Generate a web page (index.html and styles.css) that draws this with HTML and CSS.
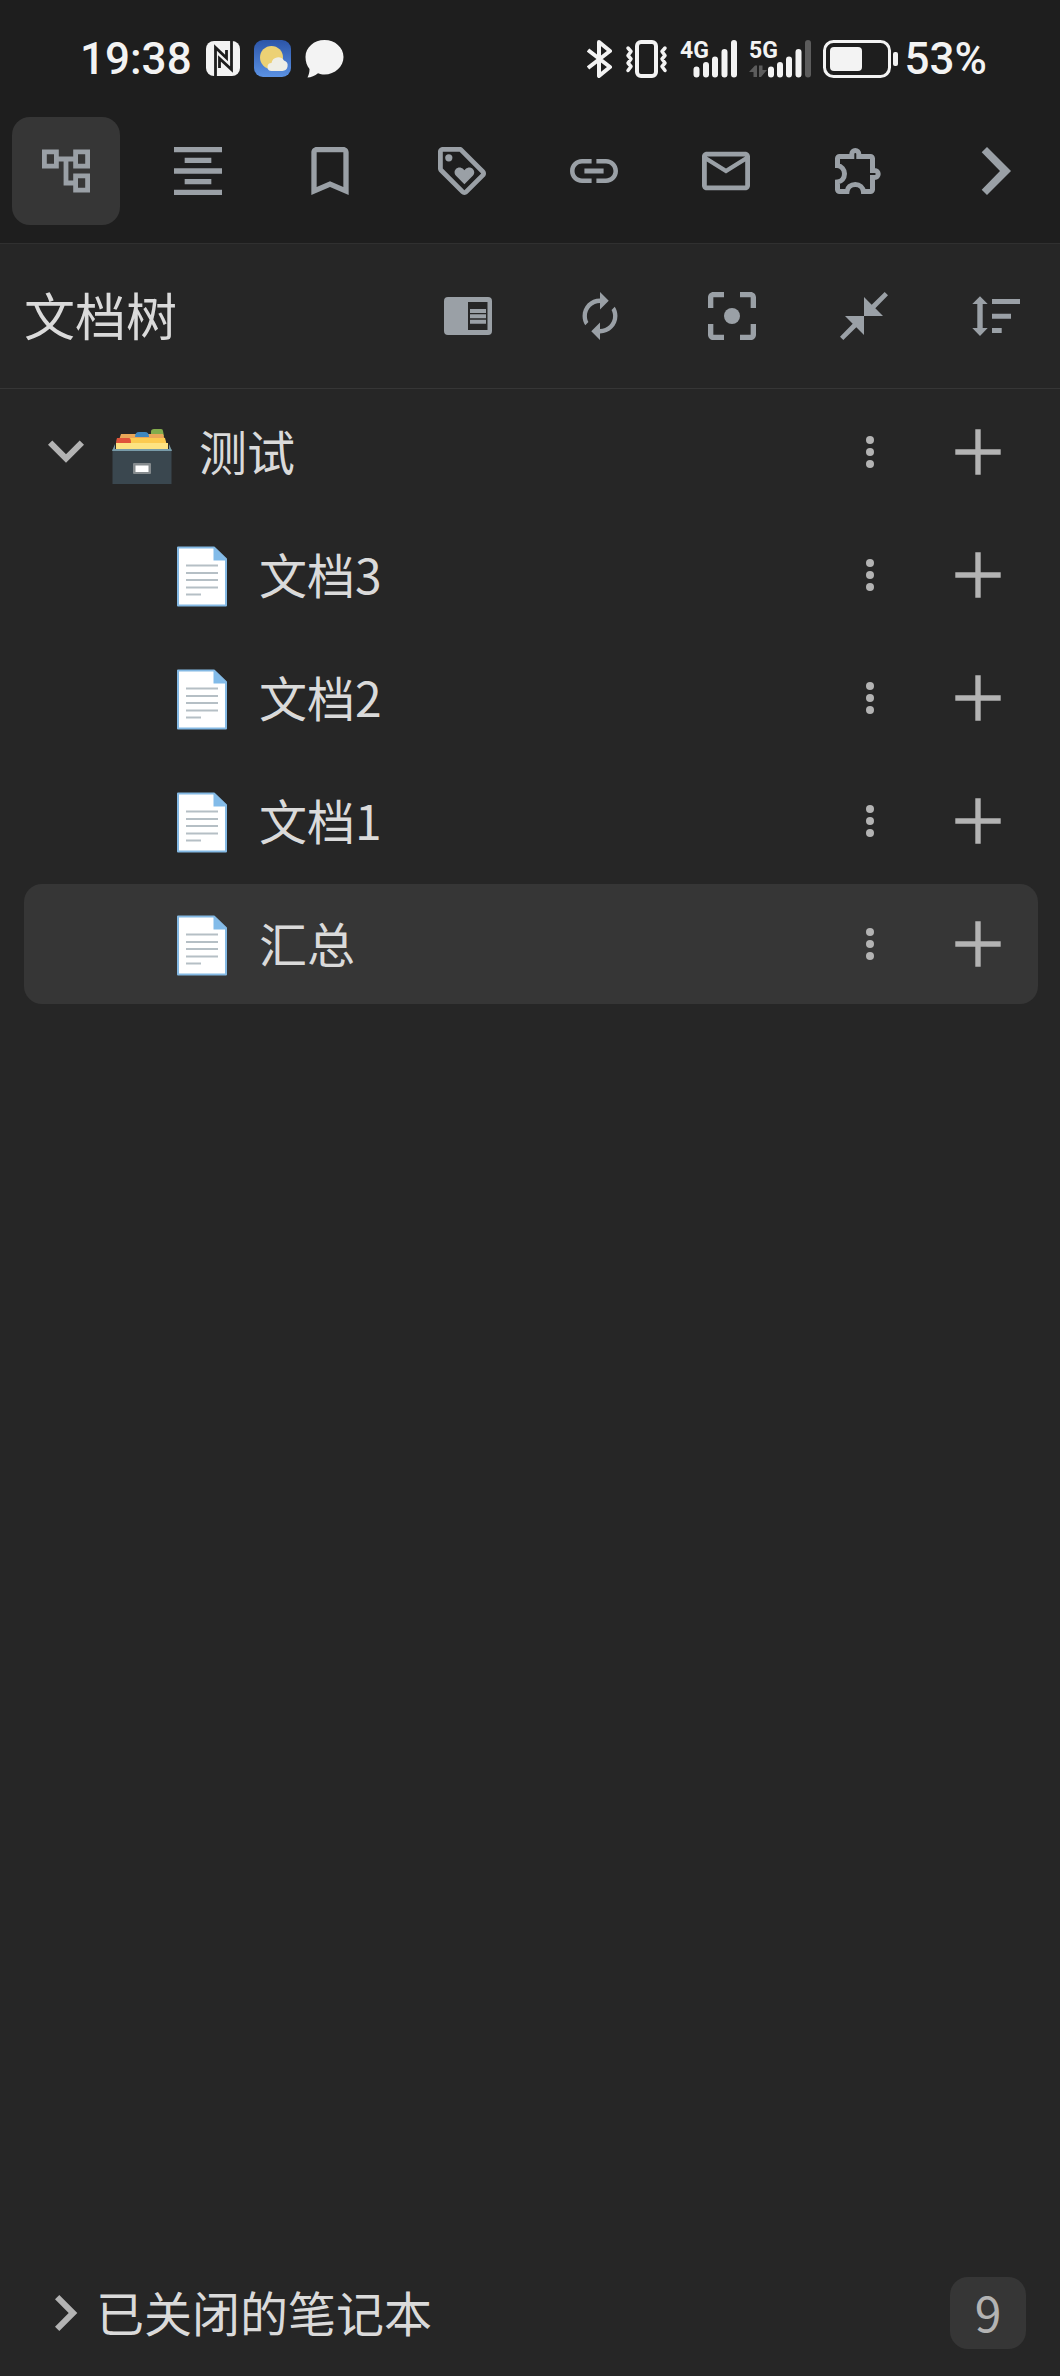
FILE: index.html
```html
<!DOCTYPE html>
<html lang="zh-CN">
<head>
<meta charset="utf-8">
<meta name="viewport" content="width=device-width">
<title>文档树</title>
<link rel="stylesheet" href="styles.css">
</head>
<body>
<svg class="defs" aria-hidden="true">
  <symbol id="more" viewBox="0 0 48 48"><circle cx="24" cy="12" r="4"/><circle cx="24" cy="24" r="4"/><circle cx="24" cy="36" r="4"/></symbol>
  <symbol id="plus" viewBox="0 0 48 48"><path d="M21.300 1.300h5.400v20h20v5.400h-20v20h-5.400v-20h-20v-5.400h20z"/></symbol>
  <symbol id="doc" viewBox="0 0 60 64">
    <path d="M6 4.500h36L54 16v46.500H6z" fill="#fff" stroke="#84b9e4" stroke-width="2" stroke-linejoin="round"/>
    <path d="M41.500 4.500 54.500 17.500h-13z" fill="#82bbe9"/>
    <path d="M14 22.500h32M14 30h32M14 37h32M14 44.500h32M14 51.500h15" stroke="#b5bfc5" stroke-width="2"/>
  </symbol>
</svg>

<header class="status">
  <div class="status-group">
    <span class="clock">19:38</span>
    <svg class="s-nfc" viewBox="0 0 34 35"><rect width="34" height="35" rx="8" fill="#f3f3f3"/><path d="M9.500 35V6.500L20.500 17V9M25.500 0v28.500L13.500 17.500V27" fill="none" stroke="#1e1e1e" stroke-width="2.800"/></svg>
    <svg class="s-weather" viewBox="0 0 37 37"><defs><linearGradient id="sky" x2="0" y2="1"><stop stop-color="#2c55a8"/><stop offset="1" stop-color="#5b92e4"/></linearGradient></defs><rect width="37" height="37" rx="9" fill="url(#sky)"/><circle cx="17.500" cy="17.500" r="11.500" fill="#ecd174"/><path d="M17.500 31a4 4 0 0 1 0-8 6.800 6.800 0 0 1 12.500-2.500A5.400 5.400 0 0 1 28 31z" fill="#eeeee6"/></svg>
    <svg class="s-bubble" viewBox="0 0 39 38"><path d="M19.500 0C30 0 38.500 7.500 38.500 17S30 34.500 19.500 34.500c-2.500 0-4.500-.4-6.500-1.200C10 36 6 37.500 2.500 37.500c1.500-3 2-5.500 2-8.500C2 26 .5 22 .5 17 .5 7.500 9 0 19.500 0z" fill="#f3f3f3"/></svg>
  </div>
  <div class="status-group status-right">
    <svg class="s-bt" viewBox="0 0 26 38"><path d="M1 10l22 17-11 9V2l11 9L1 28" fill="none" stroke="#f3f3f3" stroke-width="4" stroke-linejoin="round"/></svg>
    <svg class="s-vib" viewBox="0 0 43 38"><g fill="none" stroke="#f3f3f3" stroke-width="4" stroke-linejoin="round"><rect x="12" y="2" width="19" height="34" rx="4"/><path stroke-width="3.500" stroke-linecap="round" d="M3 8l3 3.500-3 4 3 3.500-3 4 3 3.500-3 4M40 8l-3 3.500 3 4-3 3.500 3 4-3 3.500 3 4"/></g></svg>
    <svg class="s-signal s-4g" viewBox="0 0 57 38"><text x="0" y="18" class="net">4G</text><path class="bars" d="M16.500 29.500v5M26 25v9.500M35 19.500v15M44.500 12v22.500M54 3v31.500"/></svg>
    <svg class="s-signal" viewBox="0 0 62 38"><text x="0" y="18" class="net">5G</text><path class="bars" d="M22 29.500v5M31 25v9.500M40 19.500v15M49.500 12v22.500"/><path class="bars dim" d="M59 3v31.500"/><path d="M0 32l6-6.500h2V37H4.500v-5zM10 25.500h3.500V30H18l-6 7h-2z" fill="#5c5c5c"/></svg>
    <svg class="s-battery" viewBox="0 0 76 38"><rect x="1.500" y="1.500" width="65" height="35" rx="9" fill="none" stroke="#f3f3f3" stroke-width="3"/><rect x="7" y="7" width="32" height="24" rx="4" fill="#f3f3f3"/><rect x="70" y="12" width="5" height="14" rx="2" fill="#f3f3f3"/></svg>
    <span class="clock">53%</span>
  </div>
</header>

<nav class="tabs" aria-label="侧栏">
  <button class="tab active" aria-label="文档树"><svg class="icon" viewBox="2 2 20 20"><path d="M22 11V3h-7v3H9V3H2v8h7V8h2v10h4v3h7v-8h-7v3h-2V8h2v3h7zM7 9H4V5h3v4zm10 6h3v4h-3v-4zm0-10h3v4h-3V5z"/></svg></button>
  <button class="tab" aria-label="大纲"><svg class="icon" viewBox="3 3 18 18"><path d="M7 15v2h10v-2H7zm-4 6h18v-2H3v2zm0-8h18v-2H3v2zm4-6v2h10V7H7zM3 3v2h18V3H3z"/></svg></button>
  <button class="tab" aria-label="书签"><svg class="icon" viewBox="3 3 18 18"><path d="M17 3H7c-1.100 0-2 .9-2 2v16l7-3 7 3V5c0-1.100-.9-2-2-2zm0 15l-5-2.180L7 18V5h10v13z"/></svg></button>
  <button class="tab" aria-label="标签"><svg class="icon" viewBox="2 2 20 20"><path d="M21.410 11.580l-9-9C12.050 2.220 11.550 2 11 2H4c-1.100 0-2 .9-2 2v7c0 .55.22 1.050.59 1.420l9 9c.36.36.86.58 1.410.58s1.050-.22 1.410-.59l7-7c.37-.36.59-.86.59-1.410s-.23-1.060-.59-1.420zM13 20.010L4 11V4h7v-.01l9 9-7 7.020z"/><circle cx="6.500" cy="6.500" r="1.500"/><path d="M8.900 12.550c0 .57.23 1.070.6 1.450l3.500 3.500 3.500-3.500c.37-.37.6-.89.6-1.450 0-1.130-.92-2.050-2.050-2.050-.57 0-1.080.23-1.450.6l-.6.6-.6-.59c-.37-.38-.89-.61-1.450-.61-1.130 0-2.050.92-2.050 2.050z"/></svg></button>
  <button class="tab" aria-label="反向链接"><svg class="icon" viewBox="2 2 20 20"><path d="M3.900 12c0-1.710 1.390-3.100 3.100-3.100h4V7H7c-2.760 0-5 2.240-5 5s2.240 5 5 5h4v-1.900H7c-1.710 0-3.100-1.390-3.100-3.100zM8 13h8v-2H8v2zm9-6h-4v1.900h4c1.710 0 3.100 1.390 3.100 3.100s-1.390 3.100-3.100 3.100h-4V17h4c2.760 0 5-2.240 5-5s-2.240-5-5-5z"/></svg></button>
  <button class="tab" aria-label="收集箱"><svg class="icon" viewBox="2 2 20 20"><path d="M22 6c0-1.100-.9-2-2-2H4c-1.100 0-2 .9-2 2v12c0 1.100.9 2 2 2h16c1.100 0 2-.9 2-2V6zm-2 0l-8 5-8-5h16zm0 12H4V8l8 5 8-5v10z"/></svg></button>
  <button class="tab" aria-label="插件"><svg class="icon" viewBox="0 0 48 48"><path d="M3.500 21V11.500a2 2 0 0 1 2-2h12.300V7a3.500 3.500 0 0 1 7 0v2.500h11.700a2 2 0 0 1 2 2v12h2.200a3.500 3.500 0 0 1 0 7h-2.200v12a2 2 0 0 1-2 2H29.400C29 40.500 26 37.500 21.300 37.500S13.500 40.500 13 44.500H5.500a2 2 0 0 1-2-2V35C7.500 34.500 10.500 31 10.500 26.800S7.500 19 3.500 18.500z" fill="none" stroke="currentColor" stroke-width="5"/></svg></button>
  <button class="tab last" aria-label="关闭"><svg class="icon" viewBox="0 0 48 48"><path d="M15 0l24 24-24 24-5.300-5.300L28 24 9.700 5.300z"/></svg></button>
</nav>

<main class="panel">
  <div class="toolbar">
    <h1 class="title">文档树</h1>
    <button class="tool" aria-label="阅读模式"><svg class="icon" viewBox="0 0 48 48"><path fill-rule="evenodd" d="M4 5h40a4 4 0 0 1 4 4v30a4 4 0 0 1-4 4H4a4 4 0 0 1-4-4V9a4 4 0 0 1 4-4zm20 5v28h19.500V10z"/><path d="M26 17h16v4H26zM26 22.300h16v4H26zM26 27.700h16v4H26z"/></svg></button>
    <button class="tool" aria-label="刷新"><svg class="icon" viewBox="1 1 22 22"><path d="M12 6v3l4-4-4-4v3c-4.420 0-8 3.580-8 8 0 1.570.46 3.030 1.240 4.260L6.700 14.800c-.45-.83-.7-1.790-.7-2.800 0-3.310 2.690-6 6-6zm6.760 1.740L17.300 9.200c.44.84.7 1.790.7 2.800 0 3.310-2.690 6-6 6v-3l-4 4 4 4v-3c4.420 0 8-3.580 8-8 0-1.570-.46-3.030-1.240-4.260z"/></svg></button>
    <button class="tool" aria-label="定位"><svg class="icon" viewBox="3 3 18 18"><path d="M5 15H3v4c0 1.100.9 2 2 2h4v-2H5v-4zM5 5h4V3H5c-1.100 0-2 .9-2 2v4h2V5zm14-2h-4v2h4v4h2V5c0-1.100-.9-2-2-2zm0 16h-4v2h4c1.100 0 2-.9 2-2v-4h-2v4z"/><circle cx="12" cy="12" r="3"/></svg></button>
    <button class="tool" aria-label="折叠"><svg class="icon" viewBox="0 0 48 48"><path d="M24 5v19h19l-7.700-7.700L48 3.300 44.700 0 31.700 12.700zM24 43V24H5l7.700 7.700L0 44.700 3.300 48l13-12.700z"/></svg></button>
    <button class="tool" aria-label="排序"><svg class="icon" viewBox="0 0 48 48"><path d="M8 4.300l7.700 7.700h-5v24h5L8 44 .3 36h5V12h-5zM20 7h28v5H20zM20 21.700h19v5H20zM20 36h9.700v5H20z"/></svg></button>
  </div>

  <ul class="tree">
    <li class="row">
      <button class="toggle" aria-label="展开"><svg class="arrow" viewBox="0 0 36 36"><path d="M4.300 6.500 18 20.200 31.700 6.500l4.300 4.300-18 18-18-18z"/></svg></button>
      <svg class="emoji" viewBox="0 0 60 64">
        <path d="M39 14v-2.500Q39 9 42 9h7q2 0 2 2l1 5H39z" fill="#83ac4c"/>
        <path d="M9 14h42l5 15H4z" fill="#e9a758"/>
        <path d="M5 18h48l3 12H4z" fill="#fbca50"/><path d="M4 23h52v7H4z" fill="#fde382"/>
        <path d="M5 18h12q2 0 2 5H4z" fill="#df533a"/><path d="M23 17q0-5 4-5h6q4 0 4 5z" fill="#3f87bf"/>
        <path d="M3 24 0 31h60l-3-7v5H3z" fill="#799aa5"/><path d="M.5 30.500h59V64H.5z" fill="#3a474f"/>
        <path d="M.5 29.500h59v1.500H.5z" fill="#789ba9"/><rect x="21" y="43" width="18" height="11" rx="1" fill="#858b8e"/><path d="M23.500 45.500h13v6.500h-13z" fill="#fff"/>
      </svg>
      <span class="name">测试</span>
      <button class="act" aria-label="更多"><svg class="icon"><use href="#more"/></svg></button>
      <button class="act" aria-label="新建文档"><svg class="icon"><use href="#plus"/></svg></button>
    </li>
    <li class="row child">
      <svg class="emoji"><use href="#doc"/></svg><span class="name">文档3</span>
      <button class="act" aria-label="更多"><svg class="icon"><use href="#more"/></svg></button>
      <button class="act" aria-label="新建文档"><svg class="icon"><use href="#plus"/></svg></button>
    </li>
    <li class="row child">
      <svg class="emoji"><use href="#doc"/></svg><span class="name">文档2</span>
      <button class="act" aria-label="更多"><svg class="icon"><use href="#more"/></svg></button>
      <button class="act" aria-label="新建文档"><svg class="icon"><use href="#plus"/></svg></button>
    </li>
    <li class="row child">
      <svg class="emoji"><use href="#doc"/></svg><span class="name">文档1</span>
      <button class="act" aria-label="更多"><svg class="icon"><use href="#more"/></svg></button>
      <button class="act" aria-label="新建文档"><svg class="icon"><use href="#plus"/></svg></button>
    </li>
    <li class="row child selected">
      <svg class="emoji"><use href="#doc"/></svg><span class="name">汇总</span>
      <button class="act" aria-label="更多"><svg class="icon"><use href="#more"/></svg></button>
      <button class="act" aria-label="新建文档"><svg class="icon"><use href="#plus"/></svg></button>
    </li>
  </ul>

  <button class="row closed">
    <svg class="arrow" viewBox="0 0 36 36"><path d="M11.300 0l18 18-18 18L7 31.700 20.700 18 7 4.300z"/></svg>
    <span class="name">已关闭的笔记本</span>
    <span class="count">9</span>
  </button>
</main>
</body>
</html>
```
FILE: styles.css
```css
* { box-sizing: border-box; }

body {
  margin: 0;
  min-height: 100vh;
  display: flex;
  flex-direction: column;
  background: #1e1e1e;
  color: #dadada;
  font: 48px/60px "Noto Sans CJK SC", sans-serif;
}

button {
  margin: 0;
  padding: 0;
  border: 0;
  background: none;
  color: inherit;
  font: inherit;
  text-align: left;
}

svg { display: block; flex: none; }
.defs { position: absolute; width: 0; height: 0; }
.icon { width: 48px; height: 48px; fill: currentColor; }

/* Status bar */
.status {
  display: flex;
  justify-content: space-between;
  align-items: center;
  height: 117px;
  padding: 0 73px 0 80px;
  color: #f3f3f3;
}
.status-group { display: flex; align-items: center; gap: 14px; }
.status-right { gap: 12px; }
.clock { font: 500 44px/52px Roboto, sans-serif; }
.s-nfc { width: 34px; height: 35px; }
.s-weather { width: 37px; height: 37px; }
.s-bubble { width: 39px; height: 38px; }
.s-bt { width: 26px; height: 38px; }
.s-vib { width: 43px; height: 38px; }
.s-signal { width: 62px; height: 38px; overflow: visible; }
.s-4g { width: 57px; }
.s-battery { width: 76px; height: 38px; }
.status-right .clock { margin-left: -6px; }
.net { font: 700 23px Roboto, sans-serif; fill: #f3f3f3; }
.bars { fill: none; stroke: #f3f3f3; stroke-width: 6; stroke-linecap: round; }
.dim { stroke: #5c5c5c; }

/* Dock tabs */
.tabs {
  display: flex;
  gap: 24px;
  padding: 0 10px 18px 12px;
  color: #9aa0a6;
}
.tab {
  display: grid;
  place-items: center;
  width: 108px;
  height: 108px;
  border-radius: 18px;
}
.active { background: #363636; }
.last { margin-left: auto; }

/* Panel */
.panel {
  flex: 1;
  display: flex;
  flex-direction: column;
  padding-bottom: 3px;
  border-top: 1px solid #303030;
  background: #262626;
}
.toolbar {
  display: flex;
  align-items: center;
  gap: 24px;
  height: 145px;
  padding: 0 10px 0 24px;
  border-bottom: 1px solid #363636;
}
.title { flex: 1; margin: 0; padding-bottom: 4px; font-size: 51px; font-weight: 400; }
.tool {
  display: grid;
  place-items: center;
  width: 108px;
  height: 108px;
  color: #9aa0a6;
}

/* Tree */
.tree {
  flex: 1;
  display: flex;
  flex-direction: column;
  gap: 3px;
  margin: 0;
  padding: 3px 0;
  list-style: none;
}
.row {
  display: flex;
  align-items: center;
  height: 120px;
  margin: 0 22px 0 24px;
  border-radius: 18px;
}
.child { padding-left: 148px; }
.selected { background: #363636; }
.toggle { padding: 0 28px 0 24px; }
.arrow { width: 36px; height: 36px; fill: #b3b3b3; }
.emoji { width: 60px; height: 64px; }
.name { flex: 1; padding: 0 0 4px 27px; }
.act {
  display: grid;
  place-items: center;
  width: 108px;
  height: 108px;
  color: #b3b3b3;
}
.act:last-child { margin-right: 6px; }

.closed { padding: 0 12px 0 24px; }
.closed .name { padding-left: 12px; }
.count {
  width: 76px;
  height: 72px;
  border-radius: 18px;
  background: #363636;
  color: #b3b3b3;
  line-height: 68px;
  text-align: center;
}
```
